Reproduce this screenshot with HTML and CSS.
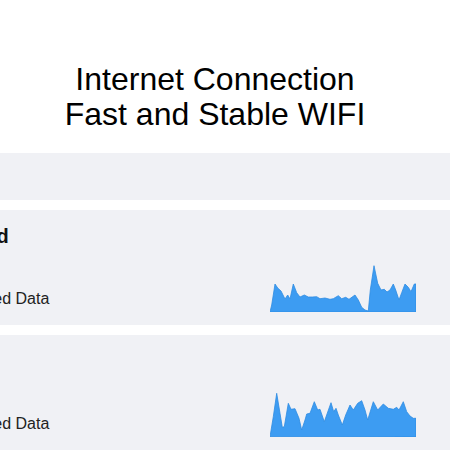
FILE: index.html
```html
<!DOCTYPE html>
<html lang="en">

<head>
    <meta charset="UTF-8">
    <meta name="viewport" content="width=device-width, initial-scale=1.0">
    <title>Internet Connection</title>
    <link rel="stylesheet" href="styles.css">
</head>

<body>

    <div class="page">
        <header class="hero">
            <h1>Internet Connection<br>Fast and Stable WIFI</h1>
        </header>

        <div class="band"></div>

        <div class="stat-card">
            <div class="stat-info">
                <h2>Good Speed</h2>
                <p>Total Transferred Data</p>
            </div>
            <svg class="stat-chart" width="146" height="50" viewBox="0 0 146 50">
                <polygon points="0,50 1.7,43 5,22 7.7,26 11,29 15,37 17.7,33 20,37 23.3,22 26.7,30.7 30,35 34.3,33 38.3,35 42.3,35 46.7,34.7 50,36.7 55,36 60,37.3 63.3,36.7 68.3,33.7 71.7,36.7 75.7,35.3 79,37.3 85,33 88.3,38 91.7,45.3 95,48 98.3,49 100.3,28 104,3.7 107.7,21.3 111,28 114.3,27.3 117,30 120,28 123.3,22 125.7,28 129,38 131.7,30.7 135,22 138.3,25.3 141,29.7 144.3,22 146,22 146,50" />
            </svg>
        </div>

        <div class="stat-card">
            <div class="stat-info">
                <h2>Latency</h2>
                <p>Total Transferred Data</p>
            </div>
            <svg class="stat-chart" width="146" height="50" viewBox="0 0 146 50">
                <polygon points="0,49.7 3.3,29.7 6.7,6.3 10,26.3 12.3,40.3 14.3,39.7 18.3,16.3 21,22.3 25,21.7 29,31.3 31.7,43 35,33 36.7,27 40,26.3 44.3,14.7 47.7,23 50,22.3 54.3,34.7 61,15.7 63.7,24.7 66,21.3 68.3,28 72.3,38 75.7,28 80,18 83.3,23 87.7,16.3 91.7,13.7 95,23 97.7,33 103.3,14.7 107.7,23 113.3,17 118.3,21.3 123.3,22.3 126.7,20.3 129,23 133.3,14.7 136.7,24.7 140,29 143.3,31.3 146,31.3 146,50" />
            </svg>
        </div>
    </div>

</body>

</html>
```

FILE: styles.css
```css
/* Global Styling */
body {
    font-family: 'Liberation Sans', Arial, sans-serif;
    margin: 0;
    padding: 0;
    background-color: #fff;
    color: #111;
    overflow: hidden;
}

/* page is wider than the window and scrolled a bit to the right */
.page {
    width: 710px;
    margin-left: -140px;
}

.hero {
    padding-top: 62px;
    margin-bottom: 21px;
    text-align: center;
}

.hero h1 {
    margin: 0;
    font-size: 32px;
    font-weight: normal;
    line-height: 35px;
    color: #000;
}

.band {
    height: 47px;
    background-color: #f0f1f5;
    margin-bottom: 10px;
}

/* Stat cards */
.stat-card {
    display: grid;
    grid-template-columns: 1fr 146px;
    column-gap: 27px;
    height: 115px;
    box-sizing: border-box;
    padding: 14px 154px 13px 31px;
    margin-bottom: 10px;
    background-color: #f0f1f5;
}

.stat-info {
    display: flex;
    flex-direction: column;
}

.stat-info h2 {
    margin: 0;
    font-size: 20px;
    line-height: 24px;
    font-weight: bold;
    color: #111;
}

.stat-info p {
    margin: 41px 0 0;
    font-size: 16px;
    line-height: 20px;
    color: #222;
}

.stat-chart {
    align-self: end;
    display: block;
}

.stat-chart polygon {
    fill: #3d9cf2;
    stroke: #2d8be2;
    stroke-width: 0.8;
    stroke-linejoin: round;
}
```
